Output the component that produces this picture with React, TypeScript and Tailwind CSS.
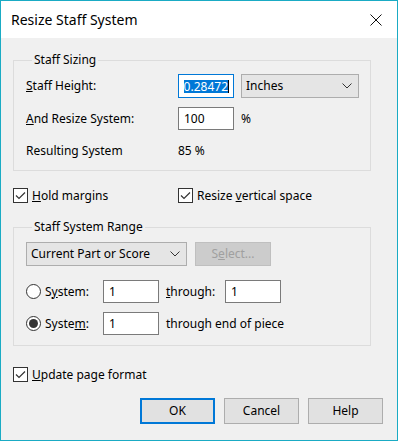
import React from "react";

const Check = () => (
  <div className="w-[15px] h-[15px] border border-[#333333] bg-white flex items-center justify-center shrink-0">
    <svg width="11" height="9" viewBox="0 0 11 9" fill="none">
      <path d="M1 4.5 L4 7.5 L10 1.5" stroke="#333333" strokeWidth="1.2" />
    </svg>
  </div>
);

const Radio = ({ on }: { on?: boolean }) => (
  <div className="w-[15px] h-[15px] rounded-full border border-[#333333] bg-white flex items-center justify-center shrink-0">
    {on && <div className="w-[9px] h-[9px] rounded-full bg-[#333333]" />}
  </div>
);

const Chevron = () => (
  <svg width="10" height="6" viewBox="0 0 10 6" fill="none">
    <path d="M0.5 0.5 L5 5 L9.5 0.5" stroke="#333333" strokeWidth="1" />
  </svg>
);

const Field = ({ value, w = "w-[56px]" }: { value: string; w?: string }) => (
  <div className={`${w} h-[23px] border border-[#7a7a7a] bg-white flex items-center pl-[5px] shrink-0`}>
    {value}
  </div>
);

export default function App() {
  return (
    <div className="w-[398px] h-[441px] border border-[#1aabc4] flex flex-col bg-[#f0f0f0] font-['Segoe_UI','Noto_Sans',sans-serif] text-[12px] text-black leading-none">
      {/* Title bar */}
      <div className="h-[37px] bg-white flex items-center justify-between pl-[10px] pr-[15px] shrink-0">
        <span className="text-[14px]">Resize Staff System</span>
        <svg width="12" height="12" viewBox="0 0 12 12" fill="none">
          <path d="M0.5 0.5 L11.5 11.5 M11.5 0.5 L0.5 11.5" stroke="#111111" strokeWidth="1" />
        </svg>
      </div>

      <div className="flex-1 px-[12px] pt-[14px]">
        {/* Staff Sizing */}
        <fieldset className="border border-[#dcdcdc] w-[358px] pl-[12px] pb-[8px]">
          <legend className="ml-[6px] px-[2px] leading-[16px]">Staff Sizing</legend>
          <div className="mt-[6px] h-[24px] flex items-center">
            <span className="w-[152px]">
              <u>S</u>taff Height:
            </span>
            <div className="w-[56px] h-[24px] border border-[#0078d7] bg-white flex items-center justify-end pr-[4px] overflow-hidden shrink-0">
              <span className="bg-[#0078d7] text-white leading-[13px] -ml-[3px]">0.28472</span>
              <span className="w-px h-[13px] bg-black" />
            </div>
            <div className="ml-[7px] w-[118px] h-[24px] border border-[#adadad] bg-[#e5e5e5] flex items-center justify-between pl-[4px] pr-[6px]">
              <span>Inches</span>
              <Chevron />
            </div>
          </div>
          <div className="mt-[9px] h-[23px] flex items-center">
            <span className="w-[152px]">
              <u>A</u>nd Resize System:
            </span>
            <Field value="100" />
            <span className="ml-[7px]">%</span>
          </div>
          <div className="mt-[9px] h-[23px] flex items-center">
            <span className="w-[152px]">Resulting System</span>
            <span>85 %</span>
          </div>
        </fieldset>

        {/* Checkboxes */}
        <div className="mt-[17px] h-[15px] flex items-center">
          <div className="w-[165px] flex items-center gap-[4px]">
            <Check />
            <span>
              <u>H</u>old margins
            </span>
          </div>
          <div className="flex items-center gap-[4px]">
            <Check />
            <span>
              Resize <u>v</u>ertical space
            </span>
          </div>
        </div>

        {/* Staff System Range */}
        <fieldset className="mt-[16px] border border-[#dcdcdc] w-[358px] pl-[12px] pb-[10px]">
          <legend className="ml-[6px] px-[2px] leading-[16px]">Staff System Range</legend>
          <div className="mt-[7px] h-[24px] flex items-center">
            <div className="w-[161px] h-[24px] border border-[#adadad] bg-[#e5e5e5] flex items-center justify-between pl-[4px] pr-[6px]">
              <span>Current Part or Score</span>
              <Chevron />
            </div>
            <div className="ml-[8px] w-[76px] h-[24px] border border-[#bfbfbf] bg-[#cccccc] text-[#a0a0a0] flex items-center justify-center">
              <span>
                S<u>e</u>lect...
              </span>
            </div>
          </div>
          <div className="mt-[14px] h-[23px] flex items-center">
            <div className="w-[77px] flex items-center gap-[4px]">
              <Radio />
              <span>
                S<u>y</u>stem:
              </span>
            </div>
            <Field value="1" />
            <span className="ml-[7px] w-[59px]">
              <u>t</u>hrough:
            </span>
            <Field value="1" />
          </div>
          <div className="mt-[9px] h-[23px] flex items-center">
            <div className="w-[77px] flex items-center gap-[4px]">
              <Radio on />
              <span>
                Syste<u>m</u>:
              </span>
            </div>
            <Field value="1" />
            <span className="ml-[7px]">through end of piece</span>
          </div>
        </fieldset>

        {/* Update page format */}
        <div className="mt-[21px] h-[15px] flex items-center gap-[4px]">
          <Check />
          <span>
            <u>U</u>pdate page format
          </span>
        </div>

        {/* Buttons */}
        <div className="mt-[16px] mr-[2px] flex justify-end gap-[9px]">
          <button className="w-[75px] h-[26px] border-2 border-[#0078d7] bg-[#e1e1e1]">OK</button>
          <button className="w-[75px] h-[26px] border border-[#adadad] bg-[#e1e1e1]">Cancel</button>
          <button className="w-[75px] h-[26px] border border-[#adadad] bg-[#e1e1e1]">Help</button>
        </div>
      </div>
    </div>
  );
}
